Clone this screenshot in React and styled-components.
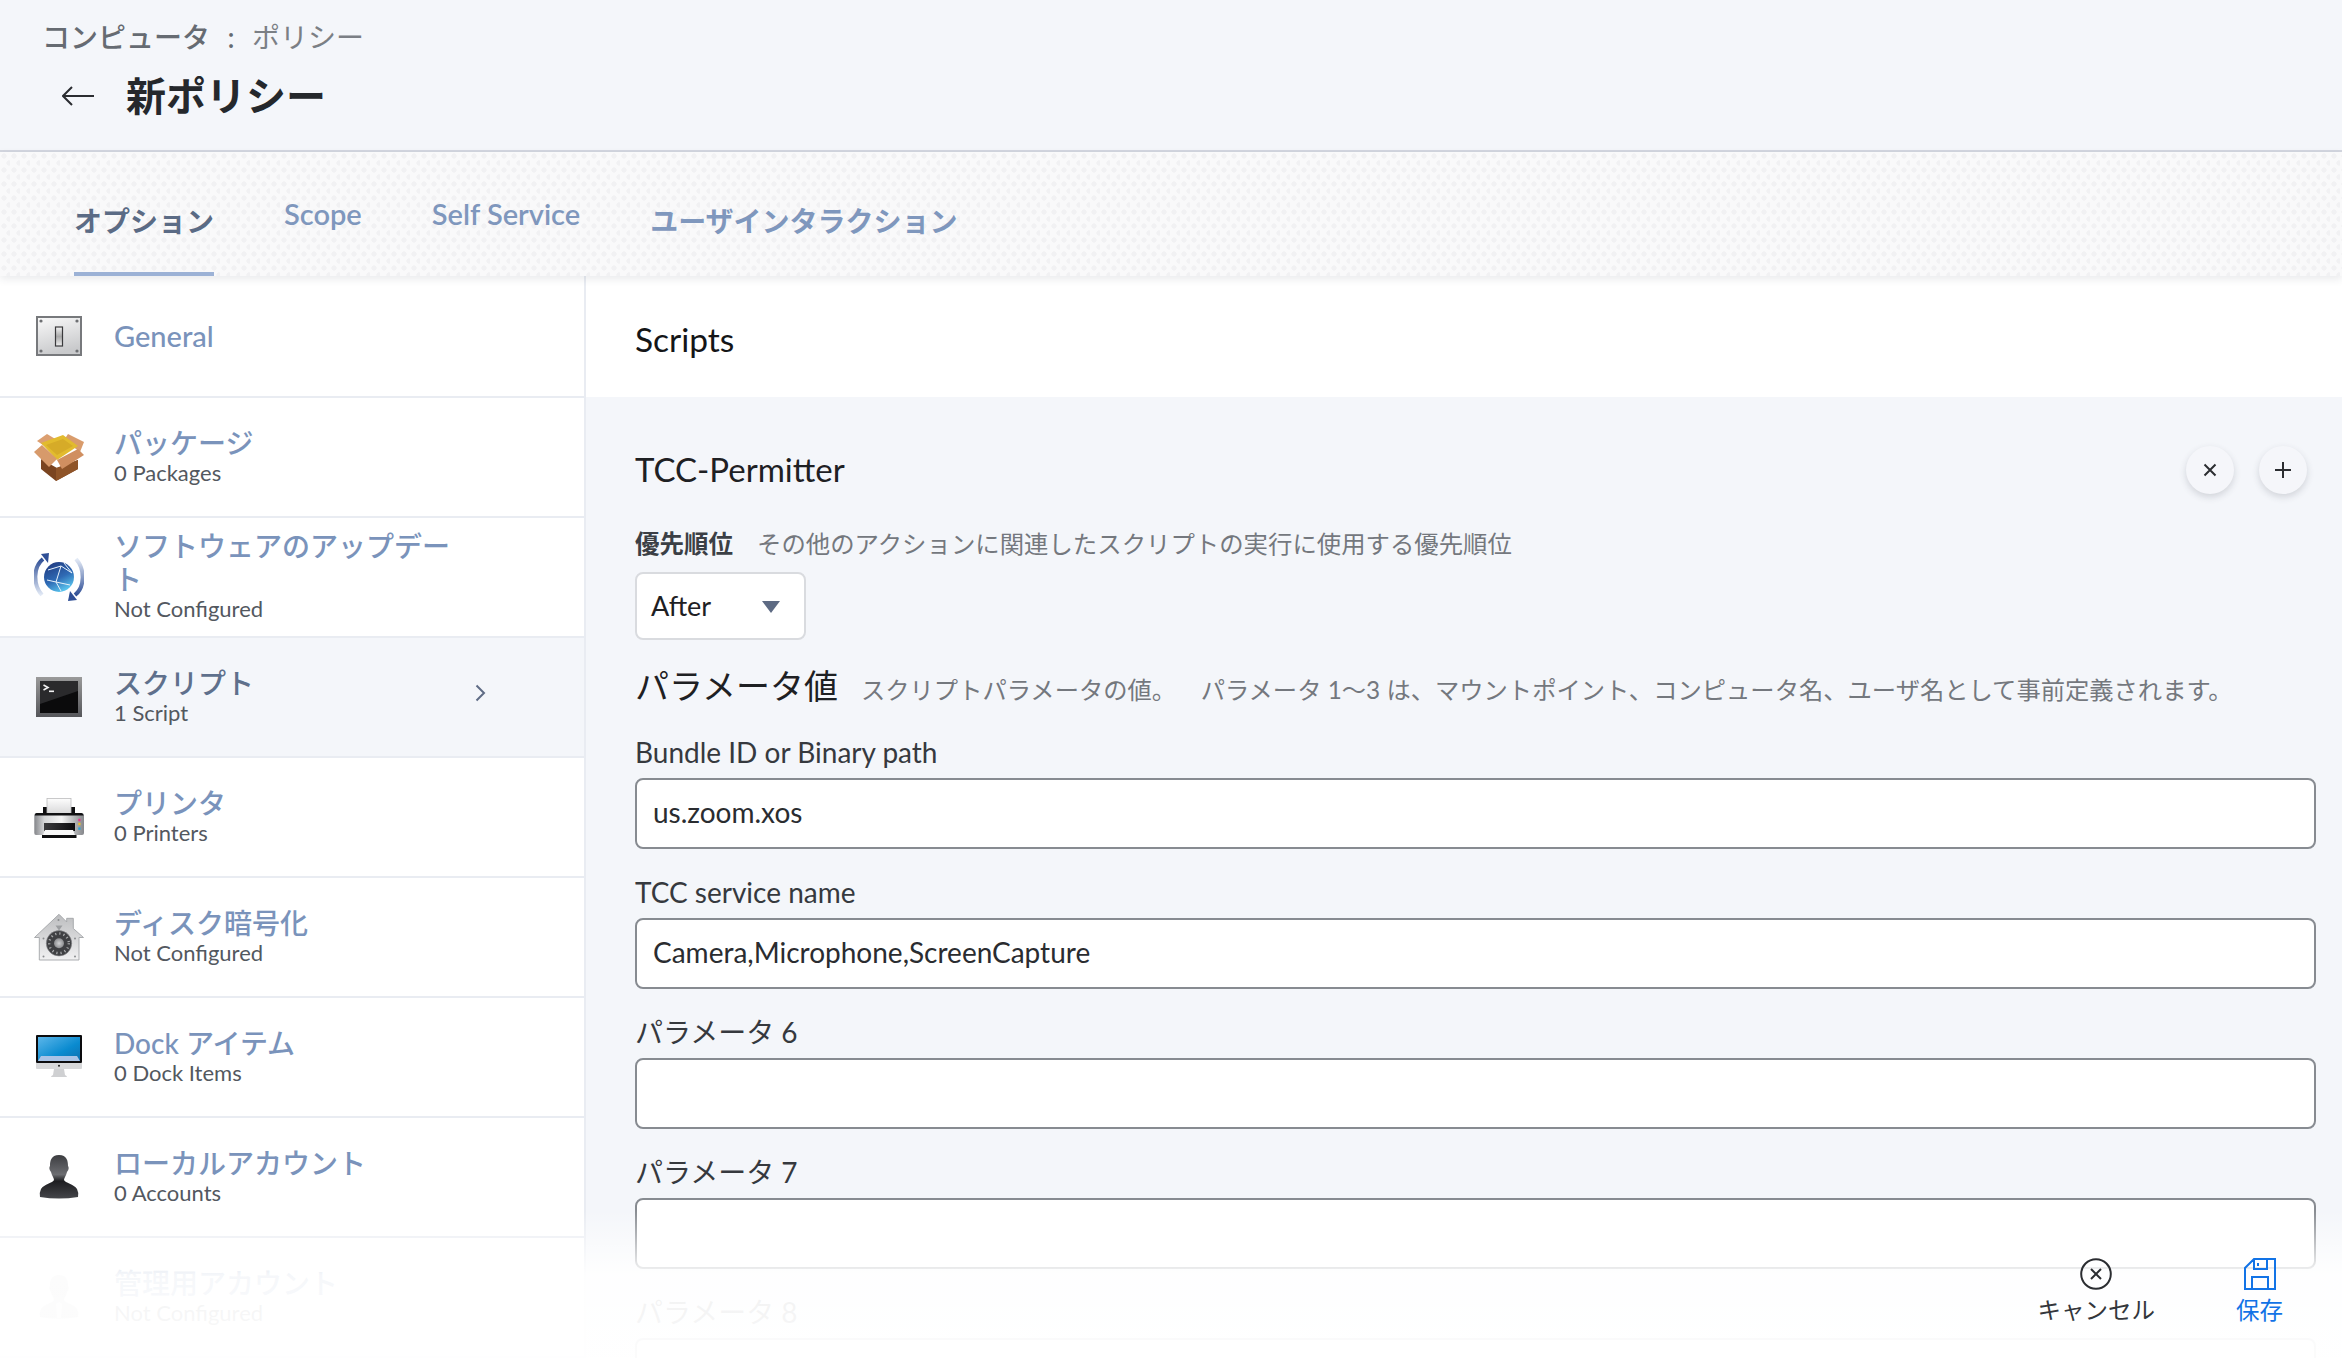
import React from 'react';
import styled, { createGlobalStyle } from 'styled-components';

const Global = createGlobalStyle`
  html, body { margin: 0; padding: 0; height: 100%; background: #fff; }
  body { font-family: 'Lato', 'Noto Sans CJK JP', sans-serif; overflow: hidden; }
`;

const Page = styled.div`
  position: relative;
  width: 2342px;
  height: 1358px;
  overflow: hidden;
  display: flex;
  flex-direction: column;
`;

const Header = styled.header`
  height: 150px;
  flex: none;
  box-sizing: content-box;
  background: #f4f6fa;
  border-bottom: 2px solid #d3d6df;
  padding-left: 42px;
  display: flex;
  flex-direction: column;
`;

const Crumbs = styled.div`
  margin-top: 19px;
  height: 36px;
  line-height: 36px;
  font-size: 28px;
  color: #7b7f85;
  display: flex;
  gap: 17.5px;
  b { font-weight: 500; color: #666b72; }
`;

const TitleRow = styled.div`
  margin-top: 16px;
  margin-left: 20px;
  display: flex;
  align-items: center;
  gap: 32px;
`;

const Title = styled.h1`
  margin: 0;
  font-size: 40px;
  line-height: 50px;
  font-weight: 700;
  color: #25282c;
`;

const Tabs = styled.nav`
  position: relative;
  z-index: 2;
  height: 124px;
  flex: none;
  display: flex;
  padding-left: 74px;
  gap: 70px;
  background-color: #f9f9fa;
  background-image: radial-gradient(circle at 4px 4px, #f1f1f3 0 2.4px, transparent 2.8px),
    radial-gradient(circle at 9px 11px, #f1f1f3 0 2.4px, transparent 2.8px);
  background-size: 10px 14px;
  box-shadow: 0 3px 8px rgba(40, 50, 70, 0.1);
`;

const Tab = styled.a`
  box-sizing: border-box;
  height: 124px;
  padding-top: ${p => (p.$latin ? 43 : 50)}px;
  font-size: ${p => (p.$latin ? 29 : 28)}px;
  line-height: 38px;
  font-weight: ${p => (p.$active ? 700 : 600)};
  color: ${p => (p.$active ? '#5b6b85' : '#7f97bd')};
  border-bottom: 4px solid ${p => (p.$active ? '#9cb2d6' : 'transparent')};
  white-space: nowrap;
`;

const Body = styled.div`
  flex: 1;
  min-height: 0;
  display: flex;
`;

const Sidebar = styled.aside`
  width: 586px;
  flex: none;
  box-sizing: border-box;
  border-right: 2px solid #e9ecf2;
  background: #fff;
`;

const Row = styled.div`
  box-sizing: border-box;
  height: ${p => (p.$first ? 122 : 120)}px;
  border-bottom: 2px solid #e9ecf2;
  background: ${p => (p.$active ? '#f4f6fa' : '#fff')};
  display: flex;
  align-items: center;
  padding-left: 34px;
`;

const IconBox = styled.div`
  width: 50px;
  height: 50px;
  flex: none;
  margin-right: 30px;
  svg { display: block; }
`;

const RowText = styled.div`
  width: 345px;
  margin-top: -2px;
`;

const RowTitle = styled.div`
  font-size: ${p => (p.$latin ? 29 : 28)}px;
  line-height: 33px;
  font-weight: 500;
  color: ${p => (p.$active ? '#5f708c' : '#7a93bb')};
`;

const RowSub = styled.div`
  font-size: 22px;
  line-height: 26px;
  color: #53585f;
`;

const Chevron = styled.svg`
  margin-left: 16px;
  margin-top: -8px;
`;

const Main = styled.main`
  flex: 1;
  min-width: 0;
  background: #f4f6fa;
`;

const MainHead = styled.div`
  box-sizing: border-box;
  height: 121px;
  background: #fff;
  padding-left: 49px;
  font-size: 33.5px;
  line-height: 126px;
  color: #141517;
`;

const Panel = styled.div`
  padding: 49px 26px 0 49px;
`;

const ScriptHead = styled.div`
  display: flex;
  align-items: center;
  height: 48px;
  font-size: 33px;
  color: #1e2023;
`;

const ScriptName = styled.div`
  flex: 1;
  margin-top: -2px;
`;

const RoundButtons = styled.div`
  display: flex;
  gap: 25px;
  margin-right: 9px;
`;

const RoundButton = styled.button`
  width: 48px;
  height: 48px;
  padding: 0;
  border: 0;
  border-radius: 50%;
  background: #f5f6fa;
  box-shadow: 0 3px 7px rgba(50, 55, 70, 0.18);
  display: flex;
  align-items: center;
  justify-content: center;
`;

const HelpRow = styled.div`
  margin-top: 35px;
  height: 30px;
  line-height: 30px;
  display: flex;
  gap: 24px;
`;

const Strong = styled.span`
  font-size: 24.5px;
  font-weight: 700;
  color: #3b3f45;
`;

const Help = styled.span`
  font-size: ${p => (p.$tight ? 24.3 : 24.4)}px;
  color: #74787e;
  white-space: pre;
`;

const Select = styled.div`
  box-sizing: border-box;
  margin-top: 13px;
  width: 171px;
  height: 68px;
  background: #fff;
  border: 2px solid #d9dbdf;
  border-radius: 8px;
  display: flex;
  align-items: center;
  justify-content: space-between;
  padding: 0 24px 2px 14px;
  font-size: 27px;
  color: #1e2023;
`;

const Caret = styled.span`
  width: 0;
  height: 0;
  border-left: 9px solid transparent;
  border-right: 9px solid transparent;
  border-top: 12px solid #5d6a83;
  margin-top: 4px;
`;

const ParamHead = styled.div`
  margin-top: 24px;
  height: 44px;
  line-height: 44px;
  display: flex;
  align-items: baseline;
  gap: 23px;
`;

const ParamTitle = styled.span`
  font-size: 34px;
  color: #1e2023;
`;

const Field = styled.div`
  margin-top: ${p => (p.$first ? 28 : 27)}px;
`;

const Label = styled.div`
  height: 34px;
  line-height: 32px;
  font-size: 28px;
  color: #36393e;
`;

const Input = styled.div`
  box-sizing: border-box;
  margin-top: 8px;
  height: 71px;
  background: #fff;
  border: 2px solid #878b91;
  border-radius: 8px;
  padding-left: 16px;
  line-height: 65px;
  font-size: 28px;
  color: #2a2c30;
`;

const Fade = styled.div`
  position: absolute;
  left: 0;
  right: 0;
  bottom: 0;
  height: 148px;
  box-sizing: border-box;
  z-index: 3;
  padding: 48px 59px 0 0;
  display: flex;
  justify-content: flex-end;
  gap: 81px;
  background: linear-gradient(to bottom, rgba(255, 255, 255, 0) 0, rgba(255, 255, 255, 0.93) 44%, rgba(255, 255, 255, 0.97) 100%);
`;

const ActionButton = styled.div`
  display: flex;
  flex-direction: column;
  align-items: center;
  gap: 5px;
  font-size: 23.5px;
  line-height: 30px;
  color: ${p => (p.$primary ? '#1273e6' : '#33363b')};
`;

/* little pictures for the sidebar, all in a 50x50 box */

const SwitchIcon = () => (
  <svg width="50" height="50" viewBox="0 0 50 50">
    <defs>
      <linearGradient id="swFace" x1="0" y1="0" x2="0.3" y2="1">
        <stop offset="0" stopColor="#fafafa" />
        <stop offset="1" stopColor="#c9cacc" />
      </linearGradient>
      <linearGradient id="swKey" x1="0" y1="0" x2="0" y2="1">
        <stop offset="0" stopColor="#f4f4f4" />
        <stop offset="0.5" stopColor="#a9a9a9" />
        <stop offset="1" stopColor="#f0f0f0" />
      </linearGradient>
    </defs>
    <rect x="3" y="6" width="44" height="38" fill="url(#swFace)" stroke="#77797c" strokeWidth="2" />
    {[[7, 10], [43, 10], [7, 40], [43, 40]].map(([x, y]) => (
      <circle key={x + '-' + y} cx={x} cy={y} r="1.6" fill="#6e7073" />
    ))}
    <rect x="21.5" y="16" width="7" height="19" fill="url(#swKey)" stroke="#3a3a3c" strokeWidth="1.2" />
  </svg>
);

const BoxIcon = () => (
  <svg width="50" height="50" viewBox="0 0 50 50">
    <path d="M3 9 L13 2 L23 8 L12 15Z" fill="#dc9f70" />
    <path d="M34 2 L50 10 L46 20 L30 8Z" fill="#d99c6c" />
    <path d="M7 11 L29 3 L44 14 L23 28Z" fill="#e2bb2e" />
    <path d="M12 13 L29 7 L39 14 L23 23Z" fill="#d6ab28" />
    <path d="M7 27 L23 36 L44 28 L44 37 L22 49 L7 37Z" fill="#7a4420" />
    <path d="M22 36 L44 28 L44 37 L22 49Z" fill="#8f5428" />
    <path d="M0 20 L8 13 L23 27 L15 35Z" fill="#d79a6b" />
    <path d="M23 28 L44 17 L50 23 L28 37Z" fill="#d08f60" />
  </svg>
);

const GlobeIcon = () => (
  <svg width="50" height="50" viewBox="0 0 50 50">
    <defs>
      <linearGradient id="glL" x1="0" y1="0" x2="0" y2="1">
        <stop offset="0" stopColor="#2f4f96" />
        <stop offset="1" stopColor="#e3eaf6" />
      </linearGradient>
      <linearGradient id="glR" x1="0" y1="1" x2="0" y2="0">
        <stop offset="0" stopColor="#2f4f96" />
        <stop offset="1" stopColor="#e3eaf6" />
      </linearGradient>
      <linearGradient id="glB" x1="0.2" y1="0" x2="0.7" y2="1">
        <stop offset="0" stopColor="#203a80" />
        <stop offset="0.55" stopColor="#2f6bb5" />
        <stop offset="1" stopColor="#5fd0f5" />
      </linearGradient>
    </defs>
    <path d="M8 43 C-1 33 -1 15 9 7" fill="none" stroke="url(#glL)" strokeWidth="4" />
    <path d="M7 2 L15 1 L14 11Z" fill="#2f4f96" />
    <path d="M42 7 C51 17 51 35 41 43" fill="none" stroke="url(#glR)" strokeWidth="4" />
    <path d="M43 48 L34 49 L36 39Z" fill="#2f4f96" />
    <circle cx="25" cy="25" r="15" fill="url(#glB)" />
    <path d="M14 18 L27 14 L38 21 M27 14 L22 30 L36 33 M22 30 L13 28 M22 30 L27 39 M30 11 L38 21" fill="none" stroke="#e8f2fb" strokeWidth="1" />
  </svg>
);

const TerminalIcon = () => (
  <svg width="50" height="50" viewBox="0 0 50 50">
    <defs>
      <linearGradient id="tmEdge" x1="0" y1="0" x2="0" y2="1">
        <stop offset="0" stopColor="#9a9a9a" />
        <stop offset="1" stopColor="#55565a" />
      </linearGradient>
    </defs>
    <rect x="2" y="5" width="46" height="40" fill="url(#tmEdge)" />
    <rect x="6" y="9" width="38" height="32" fill="#0b0b0c" />
    <path d="M6 9 H44 V19 L6 32Z" fill="#2a2a2c" />
    <path d="M9.5 13 L14 15.5 L9.5 18" fill="none" stroke="#f2f2f2" strokeWidth="1.6" />
    <rect x="15" y="18.5" width="5" height="1.6" fill="#f2f2f2" />
  </svg>
);

const PrinterIcon = () => (
  <svg width="50" height="50" viewBox="0 0 50 50">
    <defs>
      <linearGradient id="prBody" x1="0" y1="0" x2="1" y2="0">
        <stop offset="0" stopColor="#84868a" />
        <stop offset="0.2" stopColor="#d4d5d7" />
        <stop offset="0.55" stopColor="#f4f4f4" />
        <stop offset="1" stopColor="#85878b" />
      </linearGradient>
      <linearGradient id="prPaper" x1="0" y1="0" x2="0" y2="1">
        <stop offset="0" stopColor="#fdfdfd" />
        <stop offset="1" stopColor="#d9d9da" />
      </linearGradient>
      <linearGradient id="prSlot" x1="0" y1="0" x2="1" y2="0">
        <stop offset="0" stopColor="#3a3a3d" />
        <stop offset="1" stopColor="#0c0c0e" />
      </linearGradient>
    </defs>
    <rect x="9" y="15" width="32" height="7" fill="#0e0e10" />
    <rect x="13" y="6.5" width="24" height="15" fill="url(#prPaper)" stroke="#bcbcbd" strokeWidth="0.8" />
    <path d="M2.5 21 H47.5 Q50 21 50 24 V41 Q50 43 48 43 H2 Q0.3 43 0.3 41 V24 Q0.3 21 2.5 21Z" fill="url(#prBody)" />
    <path d="M2.5 21 H47.5 Q49 21 49.6 23.5 H0.7 Q1 21 2.5 21Z" fill="#101012" />
    <path d="M10 31 H41 V39 H10Z" fill="url(#prSlot)" />
    <path d="M11 38 H39 L41 43 H9Z" fill="#f7f7f7" />
    <rect x="8" y="43" width="34.5" height="3" fill="#0d0d0f" />
    <rect x="44.3" y="26.8" width="2.2" height="2.4" fill="#e8338e" />
    <rect x="44.3" y="30.8" width="2.2" height="2.4" fill="#eec02a" />
    <rect x="44.3" y="35.4" width="2.2" height="2.4" fill="#23a6dc" />
  </svg>
);

const VaultIcon = () => (
  <svg width="50" height="50" viewBox="0 0 50 50">
    <defs>
      <linearGradient id="vtHouse" x1="0" y1="0" x2="0" y2="1">
        <stop offset="0" stopColor="#bcbdbf" />
        <stop offset="1" stopColor="#f1f1f2" />
      </linearGradient>
      <radialGradient id="vtHub">
        <stop offset="0" stopColor="#d0d1d3" />
        <stop offset="1" stopColor="#8c8d90" />
      </radialGradient>
    </defs>
    <path d="M25 2.3 L32.7 10 V6.3 H39.3 V16.5 L49.5 25.5 H45 V48 H5.3 V25.5 H0.5Z" fill="url(#vtHouse)" stroke="#a3a5a8" strokeWidth="0.9" />
    <path d="M21.5 13.5 H28.5 L25 18.5Z" fill="#9b9da0" />
    {[[24.5, 8], [9.5, 26.5], [41, 26.5], [9.5, 44.5], [41, 44.5]].map(([x, y]) => (
      <circle key={x + '-' + y} cx={x} cy={y} r="1" fill="#8a8c8f" />
    ))}
    <circle cx="25" cy="31.3" r="12.7" fill="#3f4043" stroke="#8b8c8f" strokeWidth="0.6" />
    <circle cx="25" cy="31.3" r="9.8" fill="none" stroke="#aaabad" strokeWidth="2.4" strokeDasharray="1.2 3" />
    <circle cx="25" cy="31.3" r="5" fill="url(#vtHub)" />
  </svg>
);

const MacIcon = () => (
  <svg width="50" height="50" viewBox="0 0 50 50">
    <defs>
      <linearGradient id="mcScreen" x1="0" y1="0" x2="1" y2="1">
        <stop offset="0" stopColor="#5cb6ea" />
        <stop offset="0.6" stopColor="#0a8bd0" />
        <stop offset="1" stopColor="#0f6fae" />
      </linearGradient>
    </defs>
    <rect x="2" y="3" width="46" height="28" rx="1" fill="#0c0c0e" />
    <rect x="4" y="5" width="42" height="24" fill="url(#mcScreen)" />
    <path d="M4 29 L7 24 H43 L46 29Z" fill="#a9c3e6" />
    <path d="M2 31 H48 V36 Q48 37 47 37 H3 Q2 37 2 36Z" fill="#d7d8da" />
    <circle cx="25" cy="33.8" r="1" fill="#222" />
    <path d="M20 37 H30 L31 43 Q33 44 33 45 H17 Q17 44 19 43Z" fill="#cfd0d2" />
  </svg>
);

const UserIcon = ({ admin }) => (
  <svg width="50" height="50" viewBox="0 0 50 50">
    <defs>
      <linearGradient id={admin ? 'usA' : 'usU'} x1="0" y1="0" x2="0" y2="1">
        <stop offset="0" stopColor={admin ? '#d8d8da' : '#3c3d40'} />
        <stop offset="0.45" stopColor={admin ? '#c8c8ca' : '#6d6e72'} />
        <stop offset="0.6" stopColor={admin ? '#d2d2d4' : '#1d1d20'} />
        <stop offset="1" stopColor={admin ? '#bcbcbe' : '#45464a'} />
      </linearGradient>
    </defs>
    <path
      d="M25 3 C33 3 34 9 34 14 C35 15 35 18 33 20 C32 24 30 26 30 28 C31 31 40 32 43 37 Q45 41 44 45 Q25 48 6 45 Q5 41 7 37 C10 32 19 31 20 28 C20 26 18 24 17 20 C15 18 15 15 16 14 C16 9 17 3 25 3Z"
      fill={`url(#${admin ? 'usA' : 'usU'})`}
    />
    {admin && <path d="M22 32 L25 30 L28 32 L27 46 H23Z" fill="#f2f2f3" />}
  </svg>
);

const CloseGlyph = () => (
  <svg width="16" height="16" viewBox="0 0 16 16">
    <path d="M2.5 2.5 L13.5 13.5 M13.5 2.5 L2.5 13.5" stroke="#2b2d31" strokeWidth="2" fill="none" />
  </svg>
);

const PlusGlyph = () => (
  <svg width="18" height="18" viewBox="0 0 18 18">
    <path d="M9 1 V17 M1 9 H17" stroke="#2b2d31" strokeWidth="2" fill="none" />
  </svg>
);

const rows = [
  { title: 'General', icon: <SwitchIcon />, latin: true },
  { title: 'パッケージ', sub: '0 Packages', icon: <BoxIcon /> },
  { title: 'ソフトウェアのアップデート', sub: 'Not Configured', icon: <GlobeIcon /> },
  { title: 'スクリプト', sub: '1 Script', icon: <TerminalIcon />, active: true },
  { title: 'プリンタ', sub: '0 Printers', icon: <PrinterIcon /> },
  { title: 'ディスク暗号化', sub: 'Not Configured', icon: <VaultIcon /> },
  { title: 'Dock アイテム', sub: '0 Dock Items', icon: <MacIcon /> },
  { title: 'ローカルアカウント', sub: '0 Accounts', icon: <UserIcon /> },
  { title: '管理用アカウント', sub: 'Not Configured', icon: <UserIcon admin /> },
];

const fields = [
  { label: 'Bundle ID or Binary path', value: 'us.zoom.xos' },
  { label: 'TCC service name', value: 'Camera,Microphone,ScreenCapture' },
  { label: 'パラメータ 6', value: '' },
  { label: 'パラメータ 7', value: '' },
  { label: 'パラメータ 8', value: '' },
];

export default function App() {
  return (
    <Page>
      <Global />
      <Header>
        <Crumbs>
          <b>コンピュータ</b>
          <b>:</b>
          <span>ポリシー</span>
        </Crumbs>
        <TitleRow>
          <svg width="32" height="20" viewBox="0 0 32 20">
            <path d="M32 10 H1 M10 1 L1 10 L10 19" stroke="#2b2d31" strokeWidth="2" fill="none" />
          </svg>
          <Title>新ポリシー</Title>
        </TitleRow>
      </Header>

      <Tabs>
        <Tab $active>オプション</Tab>
        <Tab $latin>Scope</Tab>
        <Tab $latin>Self Service</Tab>
        <Tab>ユーザインタラクション</Tab>
      </Tabs>

      <Body>
        <Sidebar>
          {rows.map((r, i) => (
            <Row key={r.title} $first={i === 0} $active={r.active}>
              <IconBox>{r.icon}</IconBox>
              <RowText>
                <RowTitle $active={r.active} $latin={r.latin}>{r.title}</RowTitle>
                {r.sub && <RowSub>{r.sub}</RowSub>}
              </RowText>
              {r.active && (
                <Chevron width="11" height="18" viewBox="0 0 11 18">
                  <path d="M1.5 1.5 L9 9 L1.5 16.5" stroke="#5f6c85" strokeWidth="2" fill="none" />
                </Chevron>
              )}
            </Row>
          ))}
        </Sidebar>

        <Main>
          <MainHead>Scripts</MainHead>
          <Panel>
            <ScriptHead>
              <ScriptName>TCC-Permitter</ScriptName>
              <RoundButtons>
                <RoundButton><CloseGlyph /></RoundButton>
                <RoundButton><PlusGlyph /></RoundButton>
              </RoundButtons>
            </ScriptHead>
            <HelpRow>
              <Strong>優先順位</Strong>
              <Help>その他のアクションに関連したスクリプトの実行に使用する優先順位</Help>
            </HelpRow>
            <Select>
              After
              <Caret />
            </Select>
            <ParamHead>
              <ParamTitle>パラメータ値</ParamTitle>
              <Help $tight>スクリプトパラメータの値。　  パラメータ 1〜3 は、マウントポイント、コンピュータ名、ユーザ名として事前定義されます。</Help>
            </ParamHead>
            {fields.map((f, i) => (
              <Field key={f.label} $first={i === 0}>
                <Label>{f.label}</Label>
                <Input>{f.value}</Input>
              </Field>
            ))}
          </Panel>
        </Main>
      </Body>

      <Fade>
        <ActionButton>
          <svg width="32" height="32" viewBox="0 0 32 32">
            <circle cx="16" cy="16" r="14.8" stroke="#2b2d31" strokeWidth="2" fill="none" />
            <path d="M11 11 L21 21 M21 11 L11 21" stroke="#2b2d31" strokeWidth="2" fill="none" />
          </svg>
          キャンセル
        </ActionButton>
        <ActionButton $primary>
          <svg width="32" height="32" viewBox="0 0 32 32">
            <path d="M10 1 H31 V31 H1 V10Z M10 1 V11 H23 V1 M14 5 V8 M8 31 V19 H24 V31" stroke="#1273e6" strokeWidth="2" fill="none" />
          </svg>
          保存
        </ActionButton>
      </Fade>
    </Page>
  );
}
